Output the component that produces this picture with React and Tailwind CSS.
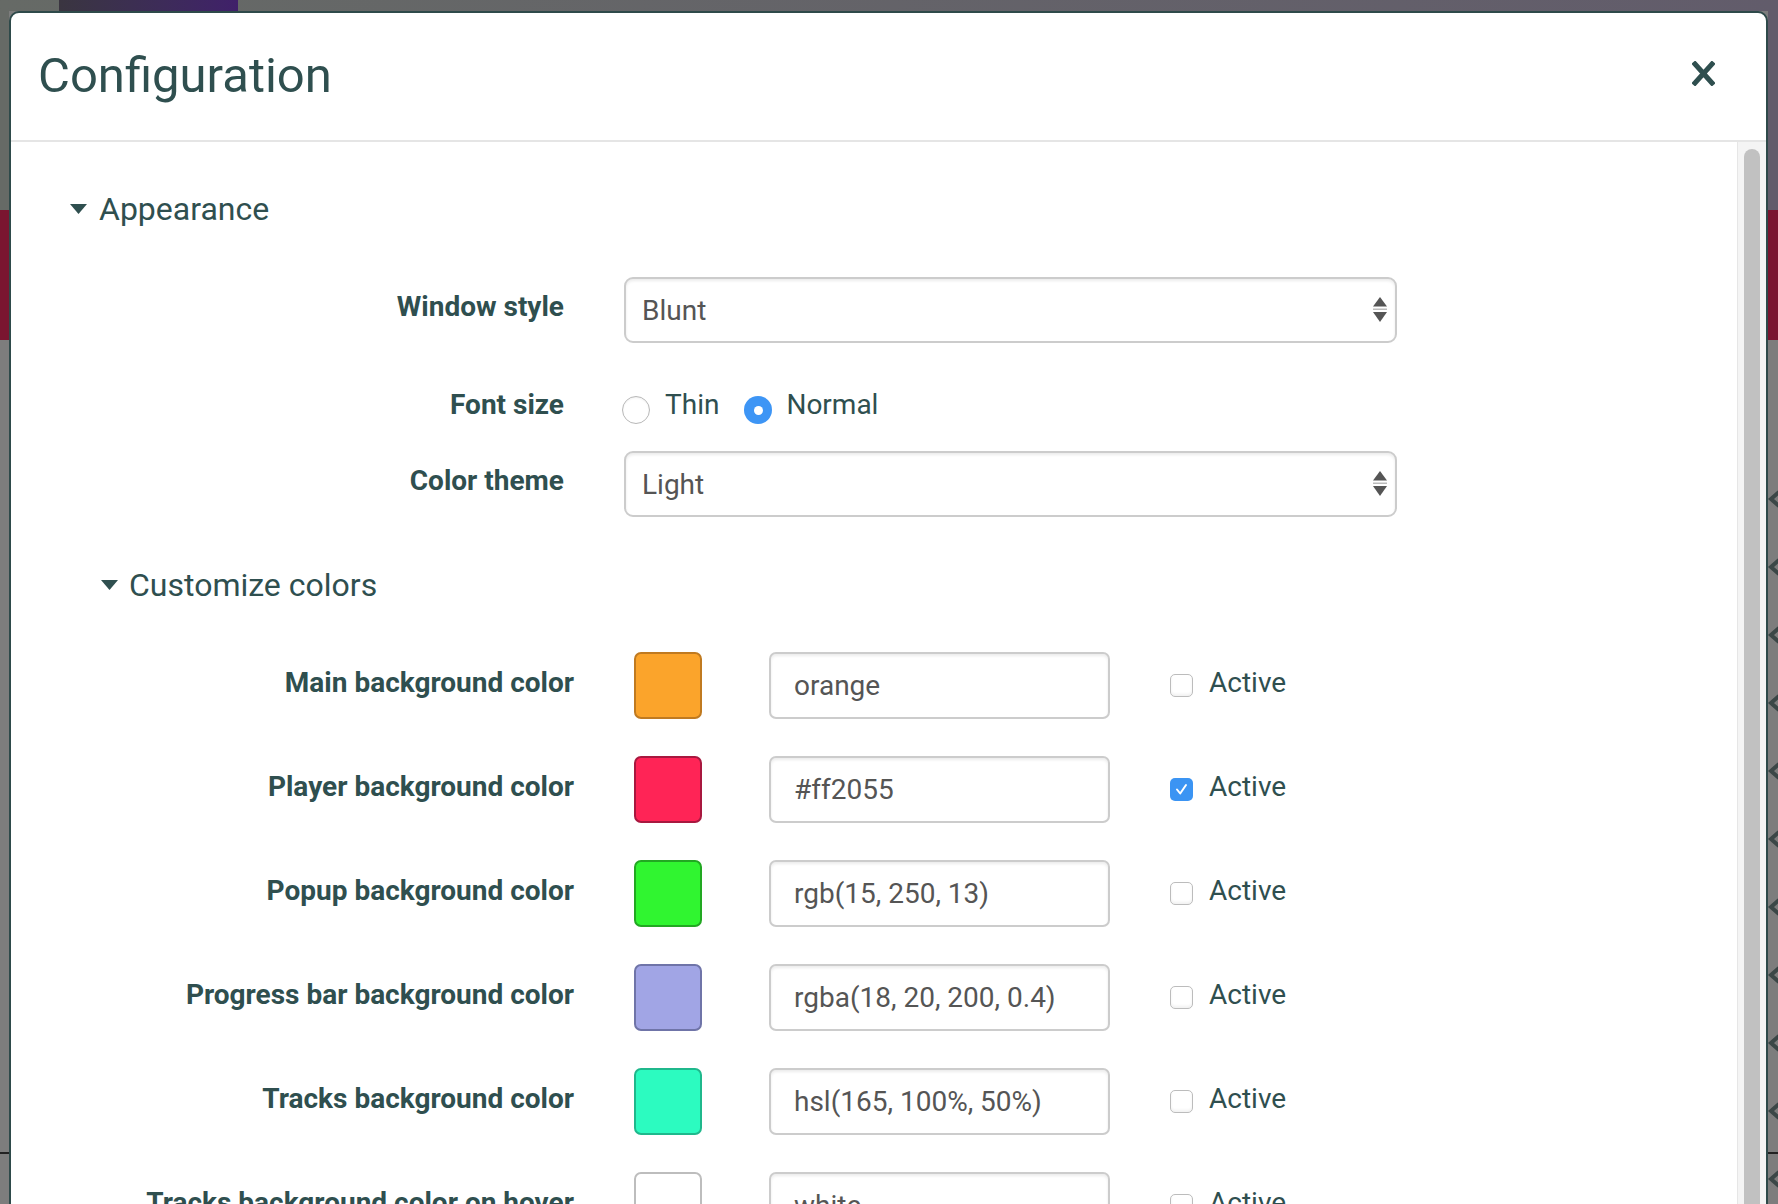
import React from "react";

const rows = [
  { label: "Main background color", color: "#fba42b", border: "#c07a20", value: "orange", checked: false },
  { label: "Player background color", color: "#ff2456", border: "#a8183f", value: "#ff2055", checked: true },
  { label: "Popup background color", color: "#30f530", border: "#22a822", value: "rgb(15, 250, 13)", checked: false },
  { label: "Progress bar background color", color: "#a1a5e5", border: "#6f74a8", value: "rgba(18, 20, 200, 0.4)", checked: false },
  { label: "Tracks background color", color: "#2cfbc0", border: "#1fb88c", value: "hsl(165, 100%, 50%)", checked: false },
  { label: "Tracks background color on hover", color: "#ffffff", border: "#bdbdbd", value: "white", checked: false },
];

const chevrons = [499, 567, 635, 703, 771, 839, 907, 975, 1043, 1111, 1179];

function Caret() {
  return (
    <svg width="17" height="10" viewBox="0 0 17 10" className="shrink-0">
      <polygon points="0,0 17,0 8.5,10" fill="#2f4f4f" />
    </svg>
  );
}

function SelectArrows() {
  return (
    <svg width="14" height="26" viewBox="0 0 14 26">
      <polygon points="0,9.5 7,0 14,9.5" fill="#555555" />
      <rect x="0" y="11.5" width="14" height="1.5" fill="#bbbbbb" />
      <polygon points="0,15 14,15 7,25" fill="#555555" />
    </svg>
  );
}

function Select({ value }) {
  return (
    <div className="ml-[60px] w-[773px] h-[66px] rounded-[9px] border-2 border-[#cccccc] bg-white shadow-[inset_0_2px_3px_rgba(0,0,0,0.08)] flex items-center justify-between pl-[16px] pr-[8px]">
      <span className="text-[28px] leading-none text-[#555555] mt-[1px]">{value}</span>
      <SelectArrows />
    </div>
  );
}

function Radio({ checked }) {
  if (checked) {
    return (
      <span className="w-[28px] h-[28px] rounded-full bg-[#3d95f5] flex items-center justify-center shrink-0">
        <span className="w-[9px] h-[9px] rounded-full bg-white" />
      </span>
    );
  }
  return <span className="w-[28px] h-[28px] rounded-full border-[1.5px] border-[#b8b8b8] bg-white shrink-0 shadow-[inset_0_1px_2px_rgba(0,0,0,0.06)]" />;
}

function Checkbox({ checked }) {
  if (checked) {
    return (
      <span className="w-[23px] h-[23px] rounded-[5px] bg-[#3b94f3] flex items-center justify-center shrink-0">
        <svg width="15" height="15" viewBox="0 0 15 15">
          <polyline points="3,7.5 6.2,11.5 12,3" fill="none" stroke="white" strokeWidth="2" strokeLinecap="round" strokeLinejoin="round" />
        </svg>
      </span>
    );
  }
  return <span className="w-[23px] h-[23px] rounded-[5px] border-[1.5px] border-[#bcbcbc] bg-white shrink-0 shadow-[inset_0_-2px_3px_rgba(0,0,0,0.06)]" />;
}

export default function App() {
  return (
    <div className="relative w-[1778px] h-[1204px] overflow-hidden bg-[#7d7d7d] pt-[11px] pl-[9px] font-['Roboto',sans-serif]">
      {/* background app behind the dialog */}
      <div className="absolute left-0 top-0 w-full h-[11px] bg-gradient-to-r from-[#666a66] to-[#625c6b]" />
      <div className="absolute left-[59px] top-0 w-[179px] h-[11px] bg-gradient-to-r from-[#3a3540] to-[#40206a]" />
      <div className="absolute left-0 top-[11px] w-[9px] h-[199px] bg-[#666a66]" />
      <div className="absolute left-0 top-[210px] w-[9px] h-[130px] bg-[#7a1530]" />
      <div className="absolute left-0 top-[1152px] w-[9px] h-[2px] bg-[#222]" />
      <div className="absolute right-0 top-[11px] w-[10px] h-[199px] bg-[#625c6b]" />
      <div className="absolute right-0 top-[210px] w-[10px] h-[130px] bg-[#7a1530]" />
      <div className="absolute right-0 top-[1152px] w-[10px] h-[2px] bg-[#222]" />
      {chevrons.map((y) => (
        <div key={y} className="absolute left-[1767px] w-[14px] h-[18px]" style={{ top: y - 9 }}>
          <svg width="14" height="18" viewBox="0 0 14 18">
            <polyline points="12,2 4,9 12,16" fill="none" stroke="#3b4747" strokeWidth="4" />
          </svg>
        </div>
      ))}

      {/* dialog */}
      <div className="relative z-10 w-[1759px] h-[1260px] rounded-t-[10px] border-2 border-[#2e4a4a] bg-white flex flex-col overflow-hidden">
        <div className="h-[129px] shrink-0 border-b-2 border-[#e5e5e5] flex items-center justify-between pl-[27px] pr-[51px]">
          <h1 className="text-[49px] leading-none font-normal text-[#2f4f4f] -mt-[2px]">Configuration</h1>
          <svg width="23" height="25" viewBox="0 0 23 25" className="-mt-[6px]">
            <path d="M3 3 L20 22 M20 3 L3 22" stroke="#2f4f4f" strokeWidth="5" strokeLinecap="square" />
          </svg>
        </div>

        <div className="flex-1 flex">
          <div className="flex-1 flex flex-col text-[#2f4f4f]">
            <div className="mt-[47px] ml-[59px] h-[40px] flex items-center gap-[12px]">
              <Caret />
              <span className="text-[32px] leading-none">Appearance</span>
            </div>

            <div className="mt-[48px] flex items-center">
              <span className="w-[553px] text-right text-[28px] leading-none font-bold -mt-[7px]">Window style</span>
              <Select value="Blunt" />
            </div>

            <div className="mt-[44px] h-[40px] flex items-center">
              <span className="w-[553px] text-right text-[28px] leading-none font-bold -mt-[5px]">Font size</span>
              <span className="ml-[58px] mt-[6px] flex"><Radio checked={false} /></span>
              <span className="ml-[15px] text-[28px] leading-none -mt-[5px]">Thin</span>
              <span className="ml-[25px] mt-[6px] flex"><Radio checked={true} /></span>
              <span className="ml-[14px] text-[28px] leading-none -mt-[5px]">Normal</span>
            </div>

            <div className="mt-[24px] flex items-center">
              <span className="w-[553px] text-right text-[28px] leading-none font-bold -mt-[6px]">Color theme</span>
              <Select value="Light" />
            </div>

            <div className="mt-[48px] ml-[90px] h-[40px] flex items-center gap-[11px]">
              <Caret />
              <span className="text-[32px] leading-none">Customize colors</span>
            </div>

            <div className="mt-[47px] flex flex-col gap-[37px]">
              {rows.map((r) => (
                <div key={r.label} className="h-[67px] flex items-center">
                  <span className="w-[563px] text-right text-[28px] leading-none font-bold -mt-[5px]">{r.label}</span>
                  <span
                    className="ml-[60px] w-[68px] h-[67px] rounded-[7px] border-2 shrink-0"
                    style={{ backgroundColor: r.color, borderColor: r.border }}
                  />
                  <div className="ml-[67px] w-[341px] h-[67px] rounded-[7px] border-2 border-[#cccccc] bg-white shadow-[inset_0_2px_3px_rgba(0,0,0,0.08)] flex items-center pl-[23px]">
                    <span className="text-[28px] leading-none text-[#555555] mt-[1px]">{r.value}</span>
                  </div>
                  <span className="ml-[60px] flex"><Checkbox checked={r.checked} /></span>
                  <span className="ml-[16px] text-[28px] leading-none -mt-[5px]">Active</span>
                </div>
              ))}
            </div>
          </div>

          <div className="w-[29px] shrink-0 bg-[#f4f4f4] border-l border-[#e6e6e6] flex justify-center">
            <div className="mt-[7px] w-[16px] h-[1200px] rounded-full bg-[#c1c1c1]" />
          </div>
        </div>
      </div>
    </div>
  );
}
